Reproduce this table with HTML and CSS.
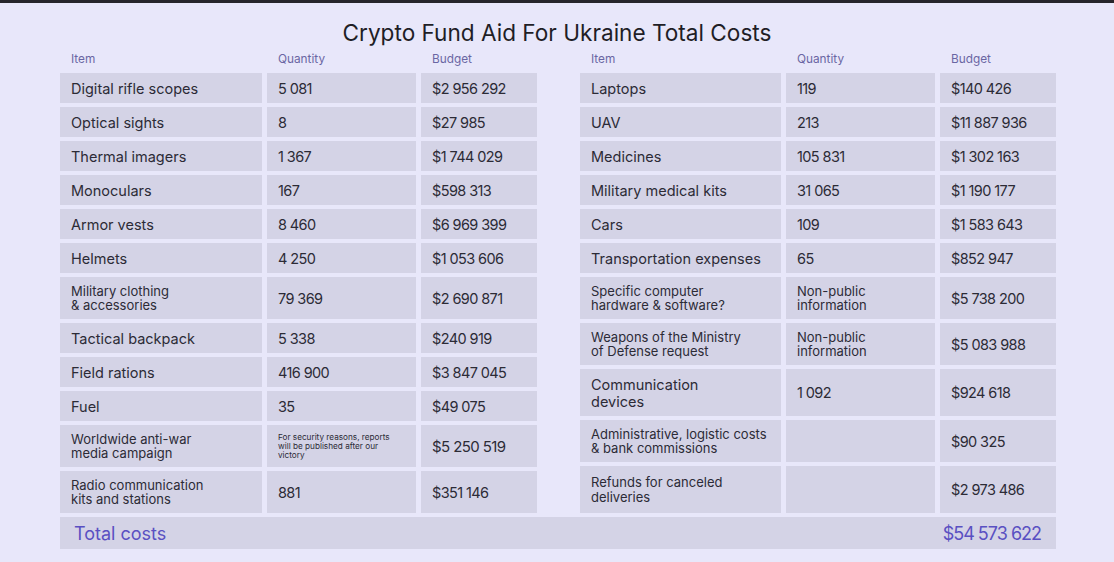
FILE: index.html
```html
<!DOCTYPE html>
<html lang="en">
<head>
<meta charset="utf-8">
<title>Crypto Fund Aid For Ukraine Total Costs</title>
<link rel="stylesheet" href="styles.css">
</head>
<body>
<div class="topbar"></div>
<h1 class="title">Crypto Fund Aid For Ukraine Total Costs</h1>
<div class="board">
  <div class="tables">
    <div class="tbl tbl-left">
      <div class="h">Item</div><div class="h">Quantity</div><div class="h">Budget</div>

      <div class="c">Digital rifle scopes</div><div class="c n">5 081</div><div class="c n">$2 956 292</div>
      <div class="c">Optical sights</div><div class="c n">8</div><div class="c n">$27 985</div>
      <div class="c">Thermal imagers</div><div class="c n">1 367</div><div class="c n">$1 744 029</div>
      <div class="c">Monoculars</div><div class="c n">167</div><div class="c n">$598 313</div>
      <div class="c">Armor vests</div><div class="c n">8 460</div><div class="c n">$6 969 399</div>
      <div class="c">Helmets</div><div class="c n">4 250</div><div class="c n">$1 053 606</div>
      <div class="c sm">Military clothing<br>&amp; accessories</div><div class="c n">79 369</div><div class="c n">$2 690 871</div>
      <div class="c">Tactical backpack</div><div class="c n">5 338</div><div class="c n">$240 919</div>
      <div class="c">Field rations</div><div class="c n">416 900</div><div class="c n">$3 847 045</div>
      <div class="c">Fuel</div><div class="c n">35</div><div class="c n">$49 075</div>
      <div class="c sm">Worldwide anti-war<br>media campaign</div><div class="c tiny"><span>For security reasons, reports will be published after our victory</span></div><div class="c n big">$5 250 519</div>
      <div class="c sm">Radio communication<br>kits and stations</div><div class="c n">881</div><div class="c n">$351 146</div>
    </div>
    <div class="tbl tbl-right">
      <div class="h">Item</div><div class="h">Quantity</div><div class="h">Budget</div>

      <div class="c">Laptops</div><div class="c n">119</div><div class="c n">$140 426</div>
      <div class="c">UAV</div><div class="c n">213</div><div class="c n">$11 887 936</div>
      <div class="c">Medicines</div><div class="c n">105 831</div><div class="c n">$1 302 163</div>
      <div class="c">Military medical kits</div><div class="c n">31 065</div><div class="c n">$1 190 177</div>
      <div class="c">Cars</div><div class="c n">109</div><div class="c n">$1 583 643</div>
      <div class="c">Transportation expenses</div><div class="c n">65</div><div class="c n">$852 947</div>
      <div class="c sm">Specific computer<br>hardware &amp; software?</div><div class="c sm">Non-public<br>information</div><div class="c n">$5 738 200</div>
      <div class="c sm">Weapons of the Ministry<br>of Defense request</div><div class="c sm">Non-public<br>information</div><div class="c n">$5 083 988</div>
      <div class="c">Communication<br>devices</div><div class="c n">1 092</div><div class="c n">$924 618</div>
      <div class="c sm">Administrative, logistic costs<br>&amp; bank commissions</div><div class="c"></div><div class="c n">$90 325</div>
      <div class="c sm">Refunds for canceled<br>deliveries</div><div class="c"></div><div class="c n">$2 973 486</div>
    </div>
  </div>
  <div class="total">
    <span class="total-label">Total costs</span>
    <span class="total-value">$54 573 622</span>
  </div>
</div>
</body>
</html>
```

FILE: styles.css
```css
html, body {
  margin: 0;
  padding: 0;
}

body {
  background: #e8e7fa;
  font-family: "Inter", "Liberation Sans", sans-serif;
  color: #2c2b36;
  width: 1114px;
  height: 562px;
  overflow: hidden;
}

.topbar {
  height: 3px;
  background: #26252b;
}

.title {
  margin: 17px 0 0;
  height: 26px;
  line-height: 26px;
  font-size: 22.6px;
  font-weight: 400;
  text-align: center;
  color: #1f1e26;
}

.board {
  width: 996px;
  margin-left: 60px;
}

.tables {
  display: flex;
  gap: 43px;
}

.tbl {
  display: grid;
  column-gap: 5px;
  row-gap: 4px;
}

.tbl-left {
  width: 477px;
  grid-template-columns: 202px 149px 116px;
  grid-template-rows: 23px repeat(6, 30px) 42px 30px 30px 30px 42px 42px;
}

.tbl-right {
  width: 476px;
  grid-template-columns: 201px 149px 116px;
  grid-template-rows: 23px repeat(6, 30px) 42px 42px 47px 42px 47px;
}

.h {
  display: flex;
  align-items: flex-end;
  padding: 0 11px 3px;
  font-size: 11.8px;
  line-height: 13px;
  color: #6a66a3;
}

.c {
  display: flex;
  align-items: center;
  padding: 0 11px;
  background: #d4d3e6;
  font-size: 14.5px;
  line-height: 17px;
}

.c.n {
  letter-spacing: -0.6px;
}

.c.n.big {
  font-size: 15px;
}

.c.sm {
  font-size: 13px;
  line-height: 14.5px;
}

.c.tiny span {
  display: block;
  max-width: 116px;
  font-size: 8.2px;
  line-height: 9px;
}

.total {
  margin-top: 4px;
  height: 32px;
  background: #d4d3e6;
  display: flex;
  align-items: center;
  justify-content: space-between;
  padding: 0 15px 0 14px;
  color: #5a50c2;
  font-size: 18px;
}

.total-value {
  letter-spacing: -1px;
}
```
